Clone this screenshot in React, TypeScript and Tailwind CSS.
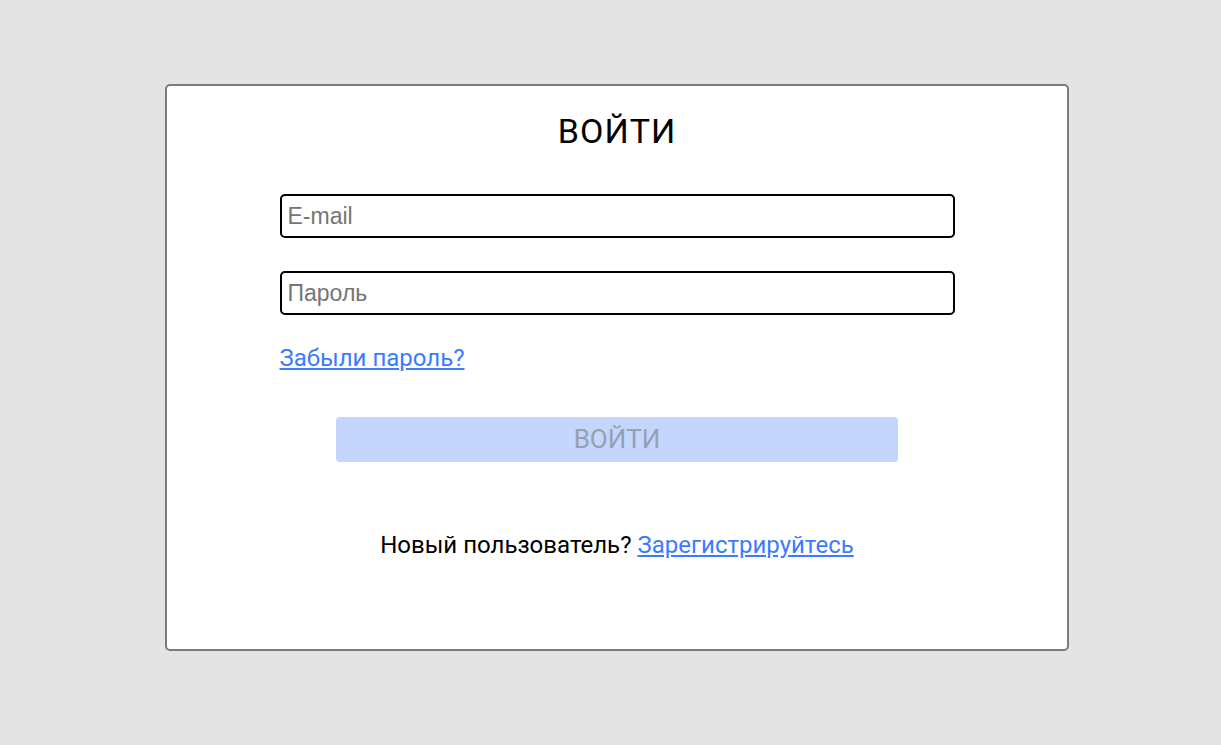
export default function App() {
  return (
    <div className="min-h-[745px] bg-[#e4e4e4] pl-[165px] pt-[84px] font-['Roboto',sans-serif]">
      <div className="flex h-[567px] w-[904px] flex-col items-center rounded-[5px] border-2 border-[#7b7b7b] bg-white pt-[25px]">
        <h1 className="text-[34px] leading-[40px] tracking-[1px] text-black">ВОЙТИ</h1>
        <form className="mt-[43px] flex w-[675px] flex-col" onSubmit={(e) => e.preventDefault()}>
          <input
            type="email"
            placeholder="E-mail"
            className="h-[44px] w-full rounded-[5px] border-2 border-black px-[6px] font-['Liberation_Sans',sans-serif] text-[23px] outline-none placeholder:text-[#757575]"
          />
          <input
            type="password"
            placeholder="Пароль"
            className="mt-[33px] h-[44px] w-full rounded-[5px] border-2 border-black px-[6px] font-['Liberation_Sans',sans-serif] text-[23px] outline-none placeholder:text-[#757575]"
          />
          <a href="#" className="mt-[29px] self-start text-[24px] leading-[28px] text-[#3b7bff] underline">
            Забыли пароль?
          </a>
          <button
            type="submit"
            disabled
            className="mx-auto mt-[45px] h-[45px] w-[562px] rounded-[4px] bg-[#c4d6fc] text-[26px] text-[#95a0b3]"
          >
            ВОЙТИ
          </button>
        </form>
        <p className="mt-[69px] text-[24px] leading-[28px] text-black">
          Новый пользователь?{" "}
          <a href="#" className="text-[#3b7bff] underline">
            Зарегистрируйтесь
          </a>
        </p>
      </div>
    </div>
  );
}
